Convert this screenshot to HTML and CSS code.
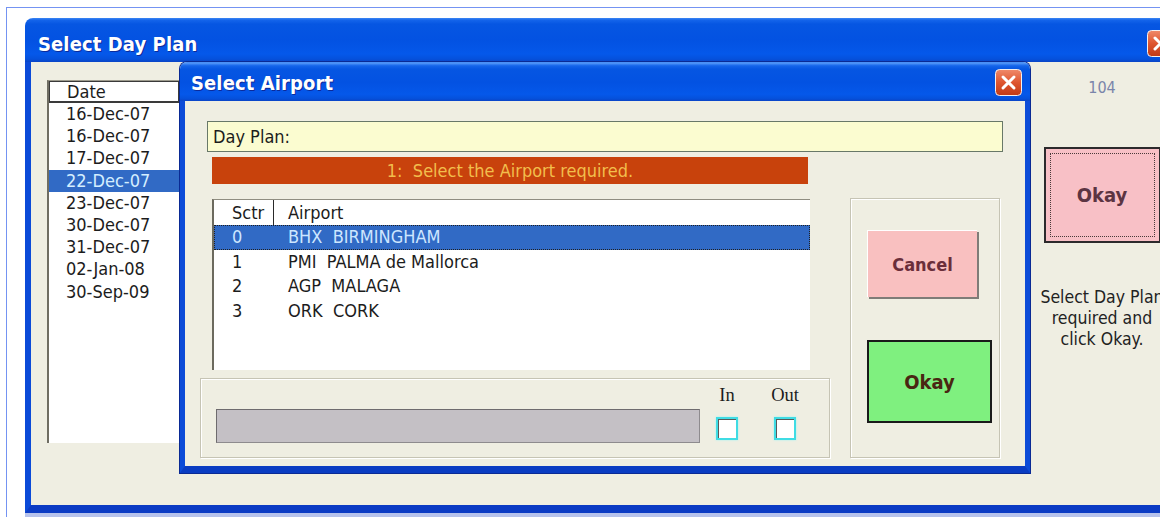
FILE: index.html
```html
<!DOCTYPE html>
<html lang="en">
<head>
<meta charset="utf-8">
<title>Select Day Plan</title>
<link rel="stylesheet" href="styles.css">
</head>
<body>
<div class="page">
  <div class="window day-plan">
    <div class="titlebar">
      <span class="title">Select Day Plan</span>
      <span class="close-btn">
        <svg viewBox="0 0 27 27" width="27" height="27">
          <defs>
            <linearGradient id="closeFillA" x1="0" y1="0" x2="0" y2="1">
              <stop offset="0" stop-color="#f08a6a"/>
              <stop offset="0.5" stop-color="#de5630"/>
              <stop offset="1" stop-color="#c23a16"/>
            </linearGradient>
          </defs>
          <rect x="0.5" y="0.5" width="26" height="26" rx="4" fill="url(#closeFillA)" stroke="#f4f0f0"/>
          <path d="M8 8 L19 19 M19 8 L8 19" stroke="#fff" stroke-width="3" stroke-linecap="round"/>
        </svg>
      </span>
    </div>
    <div class="client">
      <div class="listbox date-list">
        <div class="date-header">Date</div>
        <ul class="date-rows">
          <li>16-Dec-07</li>
          <li>16-Dec-07</li>
          <li>17-Dec-07</li>
          <li class="selected">22-Dec-07</li>
          <li>23-Dec-07</li>
          <li>30-Dec-07</li>
          <li>31-Dec-07</li>
          <li>02-Jan-08</li>
          <li>30-Sep-09</li>
        </ul>
      </div>
      <div class="side-panel">
        <div class="count">104</div>
        <button class="btn btn-default" type="button"><span class="focus-rect">Okay</span></button>
        <p class="hint">Select Day Plan<br>required and<br>click Okay.</p>
      </div>
    </div>
  </div>
</div>

<div class="window airport-dlg">
  <div class="dlg-title">
    <span class="title">Select Airport</span>
    <span class="close-btn">
      <svg viewBox="0 0 27 27" width="27" height="27">
        <defs>
          <linearGradient id="closeFillB" x1="0" y1="0" x2="0" y2="1">
            <stop offset="0" stop-color="#f08a6a"/>
            <stop offset="0.5" stop-color="#de5630"/>
            <stop offset="1" stop-color="#c23a16"/>
          </linearGradient>
        </defs>
        <rect x="0.5" y="0.5" width="26" height="26" rx="4" fill="url(#closeFillB)" stroke="#f4f0f0"/>
        <path d="M8 8 L19 19 M19 8 L8 19" stroke="#fff" stroke-width="3" stroke-linecap="round"/>
      </svg>
    </span>
  </div>
  <div class="dlg-client">
    <div class="dayplan-field">Day Plan:</div>
    <div class="status-bar">1:  Select the Airport required.</div>
    <div class="dlg-main">
      <div class="left-col">
        <div class="airport-list">
          <div class="ap-row ap-header"><span class="c-sctr">Sctr</span><span class="c-name">Airport</span></div>
          <div class="ap-row selected"><span class="c-sctr">0</span><span class="c-name">BHX  BIRMINGHAM</span></div>
          <div class="ap-row"><span class="c-sctr">1</span><span class="c-name">PMI  PALMA de Mallorca</span></div>
          <div class="ap-row"><span class="c-sctr">2</span><span class="c-name">AGP  MALAGA</span></div>
          <div class="ap-row"><span class="c-sctr">3</span><span class="c-name">ORK  CORK</span></div>
        </div>
        <div class="group io-group">
          <div class="gray-bar"></div>
          <div class="check-col first">
            <span class="check-label">In</span>
            <span class="checkbox"></span>
          </div>
          <div class="check-col">
            <span class="check-label">Out</span>
            <span class="checkbox"></span>
          </div>
        </div>
      </div>
      <div class="group btn-group">
        <button class="btn btn-cancel" type="button">Cancel</button>
        <button class="btn btn-okay" type="button">Okay</button>
      </div>
    </div>
  </div>
</div>
</body>
</html>
```

FILE: styles.css
```css
* {
  box-sizing: border-box;
}

html,
body {
  margin: 0;
  height: 100%;
  overflow: hidden;
  background: #fff;
}

body {
  font-family: "DejaVu Sans Condensed", "DejaVu Sans", sans-serif;
  font-size: 18px;
  color: #1c1c1c;
}

/* thin page frame */
.page {
  margin: 7px 0 0 6px;
  height: 510px;
  border-top: 1px solid #7493f2;
  border-left: 1px solid #7493f2;
  padding: 10px 0 0 18px;
}

/* XP style windows */
.window {
  display: flex;
  flex-direction: column;
}

.titlebar,
.dlg-title {
  flex: none;
  display: flex;
  align-items: center;
  justify-content: space-between;
  background: linear-gradient(to bottom, #3c86f4 0%, #1464ea 5%, #0656e2 14%, #0352e2 50%, #0558ea 82%, #0551dc 93%, #0a44c6 100%);
}

.title {
  color: #fff;
  font-weight: bold;
  font-size: 20px;
  text-shadow: 1px 1px 0 #0c2a9a;
  letter-spacing: 0.1px;
}

.close-btn {
  display: flex;
  width: 27px;
  height: 27px;
}

.day-plan {
  width: 1155px;
  height: 495px;
  border-radius: 8px 8px 0 0;
  overflow: hidden;
  box-shadow: 0 4px 0 #b6c2ec;
}

.day-plan .titlebar {
  height: 44px;
  padding: 7px 6px 0 13px;
}

.client {
  flex: 1;
  display: flex;
  background: #efeee2;
  border-left: 6px solid #0b4ad8;
  border-right: 6px solid #0b4ad8;
  border-bottom: 8px solid #0b3bc4;
  padding: 18px 0 0 16px;
}

/* date list */
.listbox {
  background: #fff;
}

.date-list {
  flex: none;
  width: 133px;
  height: 363px;
  border-left: 2px solid #6f6d62;
  border-top: 1px solid #9c9a8c;
}

.date-header {
  height: 22px;
  line-height: 19px;
  padding-left: 17px;
  border: 1px solid #3a3a3a;
  border-right-width: 2px;
  border-bottom-width: 2px;
}

.date-rows {
  list-style: none;
  margin: 0;
  padding: 0;
}

.date-rows li {
  height: 22.2px;
  line-height: 22.2px;
  padding-left: 17px;
}

.date-rows li.selected {
  background: #316ac5;
  color: #d4eeff;
}

/* right hand panel of the day plan window */
.side-panel {
  margin-left: auto;
  width: 144px;
  display: flex;
  flex-direction: column;
  align-items: center;
}

.count {
  margin-top: -1px;
  font-size: 16px;
  line-height: 18px;
  color: #7a85aa;
}

.btn {
  font-family: inherit;
  margin: 0;
  padding: 0;
  font-weight: bold;
  cursor: default;
  display: flex;
  align-items: center;
  justify-content: center;
}

.btn-default {
  margin-top: 50px;
  width: 117px;
  height: 96px;
  border: 2px solid #2c2a2c;
  background: #f8c0c6;
  padding: 4px;
}

.focus-rect {
  width: 100%;
  height: 100%;
  display: flex;
  align-items: center;
  justify-content: center;
  border: 1px dotted #4a3a3a;
  font-size: 20px;
  color: #5c3442;
}

.hint {
  margin: 44px 0 0;
  text-align: center;
  font-size: 17.5px;
  line-height: 21px;
  white-space: nowrap;
  color: #222;
}

/* airport dialog, floating over the day plan window */
.airport-dlg {
  position: absolute;
  left: 180px;
  top: 62px;
  width: 850px;
  height: 411px;
  border-radius: 7px 7px 0 0;
  overflow: hidden;
  box-shadow: 0 0 0 1px #0a2a94;
}

.dlg-title {
  height: 39px;
  padding: 0 8px 0 11px;
  border-top: 2px solid #4a90f6;
}

.dlg-client {
  flex: 1;
  background: #efeee2;
  border: 5px solid #0c4bd8;
  border-top: none;
  border-bottom: 7px solid #0a3cc2;
  padding: 20px 0 0 15px;
}

.dayplan-field {
  margin-left: 7px;
  width: 796px;
  height: 31px;
  line-height: 29px;
  padding-left: 5px;
  border: 1px solid #687868;
  background: #fbfcd0;
}

.status-bar {
  margin: 5px 0 0 12px;
  width: 596px;
  height: 27px;
  line-height: 27px;
  text-align: center;
  white-space: pre;
  background: #c8420c;
  color: #f2be4c;
}

.dlg-main {
  display: flex;
  gap: 20px;
  margin-top: 14px;
}

.left-col {
  width: 630px;
}

.airport-list {
  margin: 1px 0 0 12px;
  width: 598px;
  height: 171px;
  background: #fff;
  border-left: 2px solid #6c6a5e;
  border-top: 1px solid #8f8d80;
}

.ap-row {
  display: grid;
  grid-template-columns: 60px 1fr;
  height: 24.7px;
  line-height: 24.7px;
  white-space: pre;
}

.ap-header {
  height: 25px;
  line-height: 25px;
}

.c-sctr {
  padding-left: 18px;
}

.c-name {
  padding-left: 14px;
}

.ap-header .c-sctr {
  border-right: 1px solid #2a2a2a;
}

.ap-row.selected {
  background: #316ac5;
  color: #cde6ff;
  outline: 1px dotted #202020;
  outline-offset: -1px;
}

/* etched group frames */
.group {
  border: 1px solid #c6c4b4;
  box-shadow: inset 1px 1px 0 #fff, 1px 1px 0 #fff;
}

.io-group {
  margin-top: 8px;
  height: 80px;
  display: flex;
  align-items: flex-end;
  padding: 0 0 14px 15px;
}

.gray-bar {
  width: 484px;
  height: 34px;
  background: #c4c0c5;
  border: 1px solid #8e8b8e;
  border-top-color: #6e6b6e;
  border-left-color: #6e6b6e;
}

.check-col {
  width: 40px;
  margin-left: 18px;
  display: flex;
  flex-direction: column;
  align-items: center;
}

.check-col.first {
  margin-left: 7px;
}

.check-label {
  font-family: "Liberation Serif", serif;
  font-size: 18.5px;
  line-height: 18px;
  margin-bottom: 13px;
}

.checkbox {
  width: 22px;
  height: 23px;
  margin-bottom: 3px;
  border: 2px solid #3fdce4;
  background: #fff;
  box-shadow: inset 1px 1px 0 #5a5a5a, 0 0 2px #9ef4f4;
}

.btn-group {
  width: 150px;
  height: 260px;
  display: flex;
  flex-direction: column;
  align-items: flex-start;
  padding: 31px 0 0 16px;
}

.btn-cancel {
  width: 110px;
  height: 67px;
  font-size: 18px;
  color: #6a2e3a;
  background: #f9c0c0;
  border: none;
  border-top: 1px solid #fff;
  border-left: 1px solid #fff;
  box-shadow: 2px 2px 0 #7f7c78;
}

.btn-okay {
  margin-top: 43px;
  width: 125px;
  height: 83px;
  font-size: 20px;
  color: #4a2612;
  background: #7ff07f;
  border: 2px solid #1a1a1a;
}
```
